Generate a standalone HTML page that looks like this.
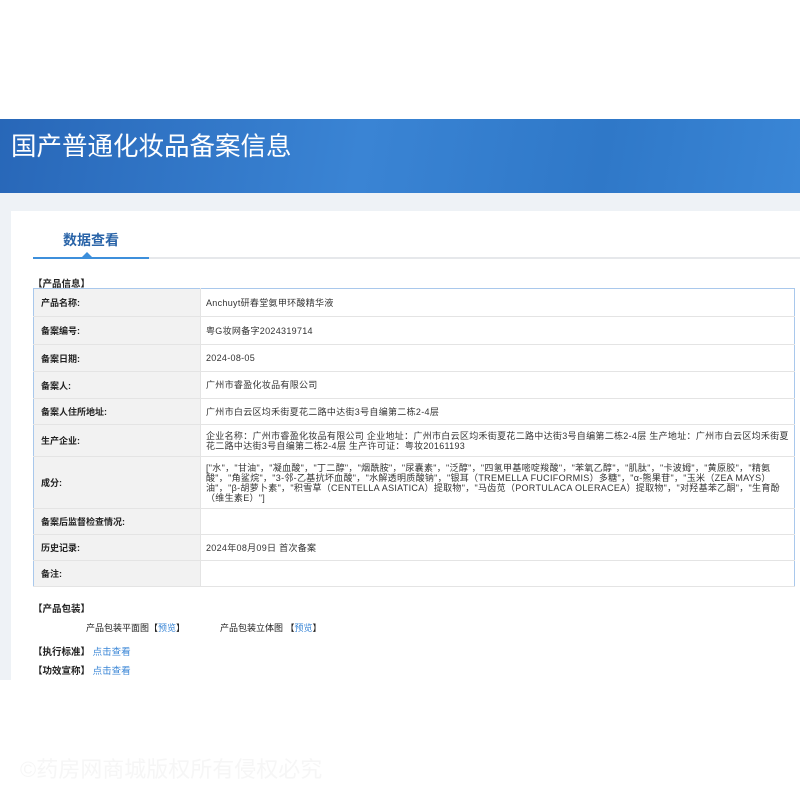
<!DOCTYPE html>
<html><head><meta charset="utf-8"><style>
*{margin:0;padding:0;box-sizing:border-box}
body{width:800px;height:800px;background:#fff;font-family:"Liberation Sans","Noto Sans CJK SC",sans-serif;position:relative;overflow:hidden}
.hdr{position:absolute;left:0;top:119px;width:800px;height:74px;background:linear-gradient(100deg,#2867b8 0%,#3a84d4 45%,#2f78c8 75%,#3a86d6 100%)}
.hdr h1{position:absolute;left:11px;top:7px;font-size:25.5px;font-weight:normal;color:#fff}
.gray{position:absolute;left:0;top:193px;width:800px;height:487px;background:#eef2f6}
.panel{position:absolute;left:11px;top:211px;width:789px;height:469px;background:#fff}
.tab{position:absolute;left:63px;top:230px;font-size:14px;font-weight:bold;color:#2a64a8}
.line{position:absolute;left:33px;top:257px;width:767px;height:2px;background:#e6e8eb}
.line2{position:absolute;left:33px;top:257px;width:116px;height:2px;background:#3d8fdb}
.tri{position:absolute;left:82px;top:252px;width:0;height:0;border-left:5px solid transparent;border-right:5px solid transparent;border-bottom:5px solid #3d8fdb}
.sec{position:absolute;font-size:9.5px;font-weight:bold;color:#222}
table{position:absolute;left:33px;top:288px;width:762px;border-collapse:collapse;border:1px solid #a9c8ec;font-size:9px;color:#333}
td{border-bottom:1px solid #e4e4e4;vertical-align:middle}
td.l{width:167px;background:#f2f2f2;font-weight:bold;padding-left:7px;color:#222;border-right:1px solid #e4e4e4}
td.v{padding:0 5px;line-height:10px;letter-spacing:0.3px}
a{color:#3a86d6;text-decoration:none}
.s{position:absolute;font-size:9px;color:#222}
.wm{position:absolute;left:20px;top:752px;font-size:22px;color:#f6f6f6}
</style></head><body>
<div class="hdr"><h1>国产普通化妆品备案信息</h1></div>
<div class="gray"></div>
<div class="panel"></div>
<div class="tab">数据查看</div>
<div class="line"></div><div class="line2"></div><div class="tri"></div>
<div class="sec" style="left:33px;top:276px">【产品信息】</div>
<table>
<tr style="height:28px"><td class="l">产品名称:</td><td class="v">Anchuyt研春堂氨甲环酸精华液</td></tr>
<tr style="height:28px"><td class="l">备案编号:</td><td class="v">粤G妆网备字2024319714</td></tr>
<tr style="height:27px"><td class="l">备案日期:</td><td class="v">2024-08-05</td></tr>
<tr style="height:27px"><td class="l">备案人:</td><td class="v">广州市睿盈化妆品有限公司</td></tr>
<tr style="height:26px"><td class="l">备案人住所地址:</td><td class="v">广州市白云区均禾街夏花二路中达街3号自编第二栋2-4层</td></tr>
<tr style="height:32px"><td class="l">生产企业:</td><td class="v">企业名称：广州市睿盈化妆品有限公司 企业地址：广州市白云区均禾街夏花二路中达街3号自编第二栋2-4层 生产地址：广州市白云区均禾街夏花二路中达街3号自编第二栋2-4层 生产许可证：粤妆20161193</td></tr>
<tr style="height:52px"><td class="l">成分:</td><td class="v">["水"，"甘油"，"凝血酸"，"丁二醇"，"烟酰胺"，"尿囊素"，"泛醇"，"四氢甲基嘧啶羧酸"，"苯氧乙醇"，"肌肽"，"卡波姆"，"黄原胶"，"精氨酸"，"角鲨烷"，"3-邻-乙基抗坏血酸"，"水解透明质酸钠"，"银耳（TREMELLA FUCIFORMIS）多糖"，"α-熊果苷"，"玉米（ZEA MAYS）油"，"β-胡萝卜素"，"积雪草（CENTELLA ASIATICA）提取物"，"马齿苋（PORTULACA OLERACEA）提取物"，"对羟基苯乙酮"，"生育酚（维生素E）"]</td></tr>
<tr style="height:26px"><td class="l">备案后监督检查情况:</td><td class="v"></td></tr>
<tr style="height:26px"><td class="l">历史记录:</td><td class="v">2024年08月09日 首次备案</td></tr>
<tr style="height:26px"><td class="l">备注:</td><td class="v"></td></tr>
</table>
<div class="sec" style="left:33px;top:601px">【产品包装】</div>
<div class="s" style="left:86px;top:621px">产品包装平面图【<a>预览</a>】</div>
<div class="s" style="left:220px;top:621px">产品包装立体图 【<a>预览</a>】</div>
<div class="sec" style="left:33px;top:644px">【执行标准】 <a style="font-weight:normal">点击查看</a></div>
<div class="sec" style="left:33px;top:663px">【功效宣称】 <a style="font-weight:normal">点击查看</a></div>
<div class="wm">©药房网商城版权所有侵权必究</div>
</body></html>
